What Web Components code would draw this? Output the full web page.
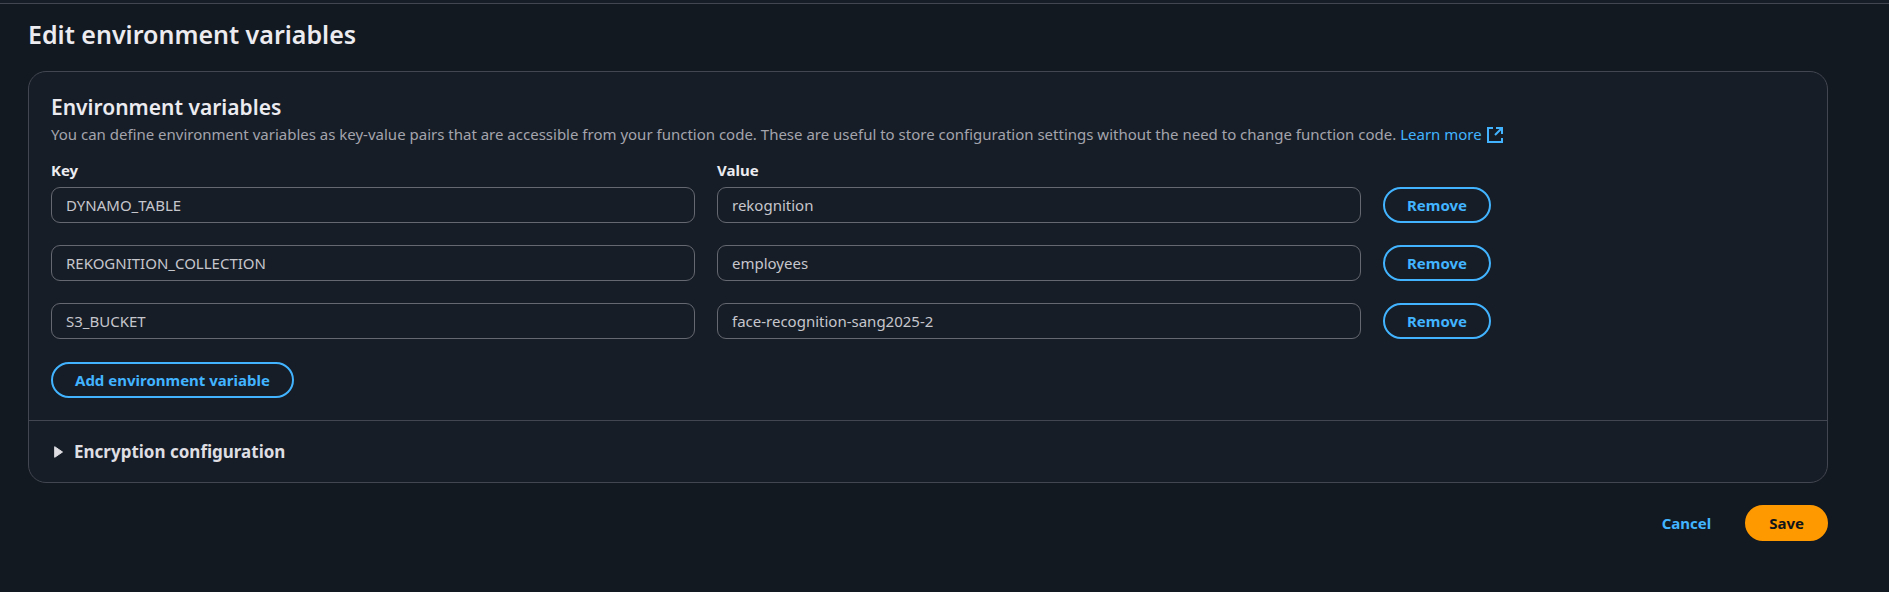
<!DOCTYPE html>
<html lang="en">
<head>
<meta charset="utf-8">
<title>Edit environment variables</title>
<style>
  html { background: #131920; }
  body {
    margin: 0;
    color: #dedee3;
    font: 400 15px/22px "Noto Sans", "Open Sans", sans-serif;
    --accent: #42b4ff;
    --surface: #161d26;
    --divider: #424650;
    --field-border: #656871;
    --heading: #ebebf0;
    --muted: #a4a4ad;
    --field-text: #c6c6cd;
  }
</style>
</head>
<body>
<env-page></env-page>

<script>
const define = (name, html, setup) => {
  const template = document.createElement('template');
  template.innerHTML = `<style>*, ::before, ::after { box-sizing: border-box; } :host { display: block; }</style>${html}`;
  customElements.define(name, class extends HTMLElement {
    constructor() {
      super();
      this.attachShadow({ mode: 'open' }).append(template.content.cloneNode(true));
    }
    connectedCallback() {
      if (setup) setup(this, this.shadowRoot);
    }
  });
};

define('ui-button', `
  <style>
    :host { display: inline-block; }
    button {
      display: block;
      height: 36px;
      padding: 0 22px;
      border: 2px solid var(--accent);
      border-radius: 18px;
      background: transparent;
      color: var(--accent);
      font: 700 15px/22px "Noto Sans", "Open Sans", sans-serif;
      white-space: nowrap;
      cursor: pointer;
    }
    :host([variant="link"]) button { border-color: transparent; }
    :host([variant="primary"]) button { border-color: #ff9900; background: #ff9900; color: #0f141a; }
  </style>
  <button type="button"><slot></slot></button>
`);

define('ui-field', `
  <style>
    label { display: block; margin-bottom: 6px; font-weight: 700; color: var(--heading); }
    input {
      display: block;
      width: 100%;
      height: 36px;
      padding: 0 14px;
      border: 1px solid var(--field-border);
      border-radius: 9px;
      background: var(--surface);
      color: var(--field-text);
      font: inherit;
    }
  </style>
  <label for="control"></label>
  <input id="control" type="text" autocomplete="off" spellcheck="false">
`);

define('env-row', `
  <style>
    .row {
      display: grid;
      grid-template-columns: repeat(8, minmax(0, 1fr));
      column-gap: 22px;
      align-items: end;
    }
    ui-field { grid-column: span 3; }
    ui-button { grid-column: span 2; }
  </style>
  <div class="row">
    <ui-field class="key"></ui-field>
    <ui-field class="value"></ui-field>
    <ui-button>Remove</ui-button>
  </div>
`, (host, root) => {
  for (const [name, text] of [['key', 'Key'], ['value', 'Value']]) {
    const field = root.querySelector('.' + name).shadowRoot;
    const label = field.querySelector('label');
    const input = field.querySelector('input');
    input.value = host.getAttribute(name);
    // Only the first row shows its labels; the others carry them for assistive technology.
    if (host.hasAttribute('first')) {
      label.textContent = text;
    } else {
      label.remove();
      input.setAttribute('aria-label', text);
    }
  }
});

define('external-link', `
  <style>
    :host { display: inline; }
    a { color: var(--accent); text-decoration: none; white-space: nowrap; }
    svg { width: 18px; height: 18px; margin-left: 4px; vertical-align: -4px; }
  </style>
  <a href="#learn-more"><slot></slot><svg viewBox="0 0 18 18" fill="none" stroke="currentColor" stroke-width="2" aria-hidden="true"><path d="M7 2H2v14h14v-4M10 2h6v6M16 2L9 9"/></svg></a>
`);

define('env-card', `
  <style>
    :host {
      border: 1px solid var(--divider);
      border-radius: 18px;
      background: var(--surface);
    }
    .main { padding: 20px 22px 22px; }
    .footer { padding: 20px 22px 19px; border-top: 1px solid var(--divider); }
  </style>
  <div class="main"><slot></slot></div>
  <div class="footer"><slot name="footer"></slot></div>
`);

define('ui-expander', `
  <style>
    summary {
      display: flex;
      align-items: center;
      gap: 11px;
      padding-left: 3px;
      list-style: none;
      font-weight: 700;
      font-size: 17px;
      cursor: pointer;
    }
    svg { width: 9px; height: 12px; }
  </style>
  <details>
    <summary><svg viewBox="0 0 9 12" fill="currentColor" stroke="currentColor" stroke-linejoin="round" aria-hidden="true"><path d="M.7.7v10.600L8.500 6z"/></svg><slot></slot></summary>
  </details>
`);

define('env-page', `
  <style>
    .topbar { height: 4px; border-bottom: 1px solid var(--divider); background: var(--surface); }
    main { margin: 0 61px 0 28px; padding-top: 14px; }
    h1, h2 { font-weight: 650; color: var(--heading); }
    h1 { margin: 0 0 21px; font-size: 25px; line-height: 32px; }
    h2 { margin: 0; font-size: 21px; line-height: 30px; }
    p { margin: 1px 0 14px; color: var(--muted); }
    .rows { display: grid; gap: 22px; margin-bottom: 23px; }
    .add { display: block; }
    .actions { display: flex; justify-content: flex-end; gap: 10px; padding: 22px 0; }
  </style>
  <div class="topbar"></div>
  <main>
    <h1>Edit environment variables</h1>
    <env-card>
      <h2>Environment variables</h2>
      <p>You can define environment variables as key-value pairs that are accessible from your function code. These are useful to store configuration settings without the need to change function code. <external-link>Learn more</external-link></p>
      <div class="rows">
        <env-row first key="DYNAMO_TABLE" value="rekognition"></env-row>
        <env-row key="REKOGNITION_COLLECTION" value="employees"></env-row>
        <env-row key="S3_BUCKET" value="face-recognition-sang2025-2"></env-row>
      </div>
      <ui-button class="add">Add environment variable</ui-button>
      <ui-expander slot="footer">Encryption configuration</ui-expander>
    </env-card>
    <div class="actions">
      <ui-button variant="link">Cancel</ui-button>
      <ui-button variant="primary">Save</ui-button>
    </div>
  </main>
`);
</script>
</body>
</html>
